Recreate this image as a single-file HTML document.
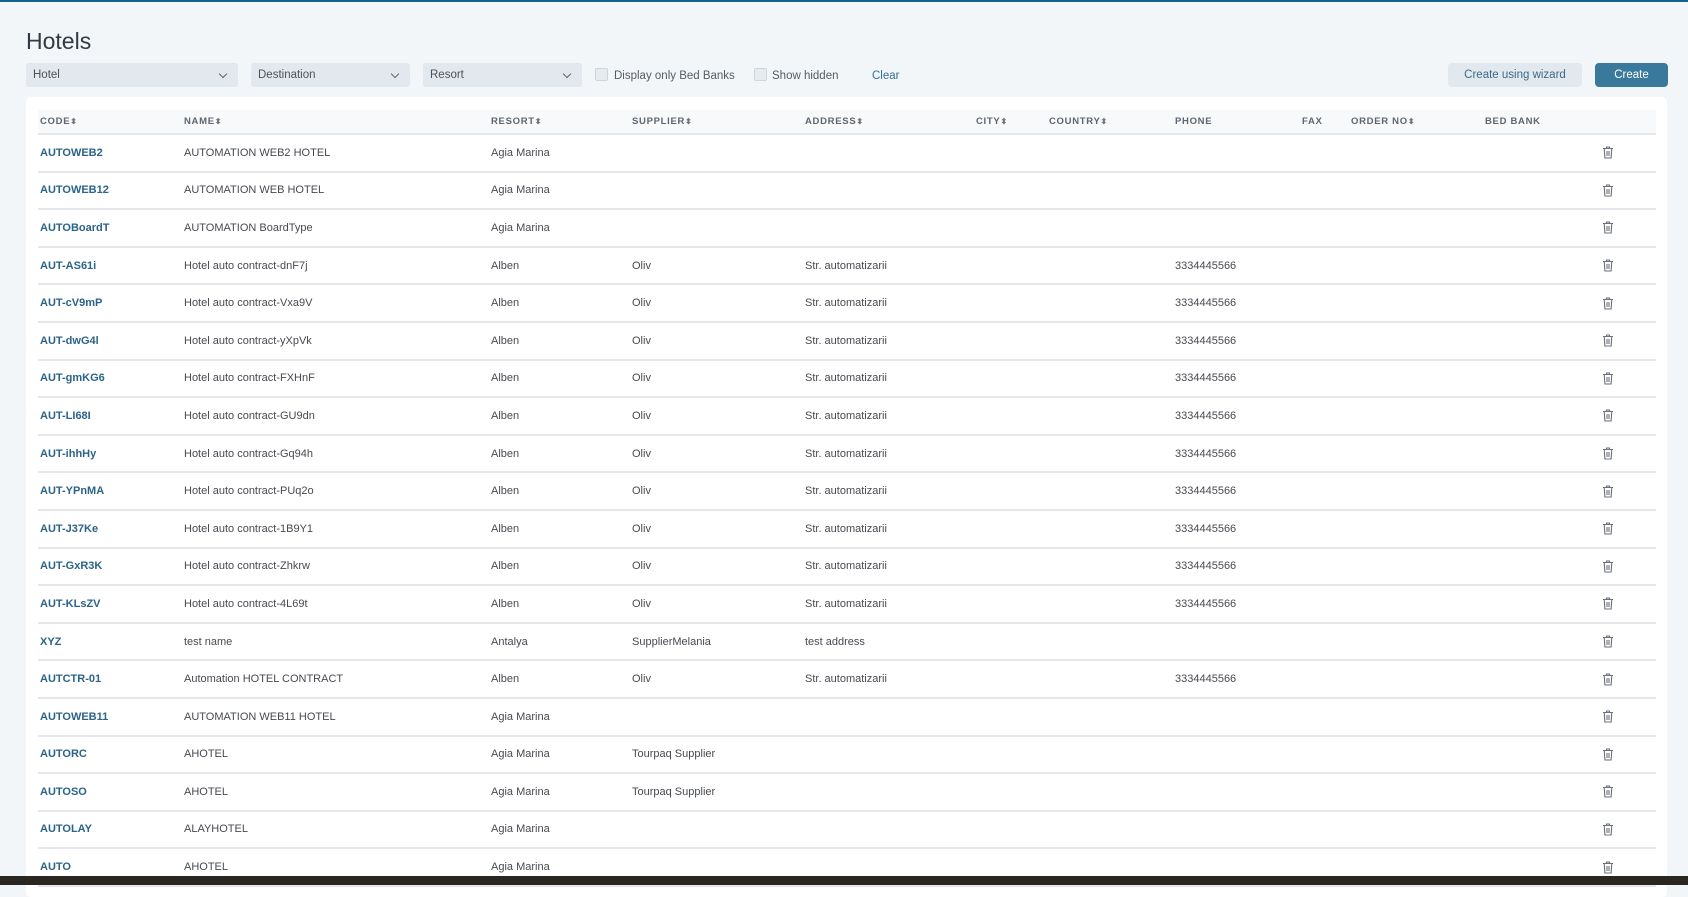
<!DOCTYPE html>
<html><head><meta charset="utf-8"><style>
*{box-sizing:border-box;margin:0;padding:0}
body{width:1688px;height:885px;overflow:hidden;background:#f3f6f9;font-family:"Liberation Sans",sans-serif;color:#3d4046;position:relative}
.top{position:absolute;left:0;top:0;width:1688px;height:2px;background:#11628f}
h1{position:absolute;left:26px;top:28px;font-size:23px;font-weight:400;color:#333a42}
.sel{position:absolute;top:63px;height:24px;background:#e2e8ee;border-radius:3px;font-size:11.5px;line-height:25px;padding-left:7px;color:#4a535c}
.sel:after{content:"";position:absolute;right:12px;top:8px;width:5px;height:5px;border-right:1.3px solid #666;border-bottom:1.3px solid #666;transform:rotate(45deg)}
.cb{position:absolute;top:68px;width:13px;height:13px;border:1px solid #cdd5dd;background:#e6ebf0;border-radius:2px}
.lbl{position:absolute;top:70px;font-size:11.5px;color:#555c63}
.btn{position:absolute;top:63px;height:24px;border-radius:4px;font-size:11.5px;line-height:25px;text-align:center}
.dark{position:absolute;left:0;top:876px;width:1688px;height:9px;background:#2a2622}
.card{position:absolute;left:26px;top:97px;width:1641px;height:800px;background:#fff;border-radius:5px}
table{position:absolute;left:38px;top:110px;width:1618px;border-collapse:collapse;table-layout:fixed;font-size:11px}
th{height:24px;background:#f7f9fb;text-align:left;font-size:9.5px;letter-spacing:.7px;color:#5d6570;font-weight:700;border-bottom:2px solid #e5e7ea;padding-left:2px}
td{height:37.6px;border-bottom:2px solid #e5e7ea;padding-left:2px;white-space:nowrap;color:#464a50}
td.c{color:#2b6488;font-weight:700}
.s{font-size:8px;color:#777}
</style></head><body>
<div class="top"></div>
<h1>Hotels</h1>
<div class="sel" style="left:26px;width:212px">Hotel</div>
<div class="sel" style="left:251px;width:159px">Destination</div>
<div class="sel" style="left:423px;width:159px">Resort</div>
<div class="cb" style="left:595px"></div><div class="lbl" style="left:614px">Display only Bed Banks</div>
<div class="cb" style="left:754px"></div><div class="lbl" style="left:772px">Show hidden</div>
<div class="lbl" style="left:872px;color:#2f6f97">Clear</div>
<div class="btn" style="left:1448px;width:134px;background:#e1e8ee;color:#3d6a88">Create using wizard</div>
<div class="btn" style="left:1595px;width:73px;background:#38799c;color:#fff">Create</div>
<div class="card"></div>
<table>
<colgroup><col style="width:144px"><col style="width:307px"><col style="width:141px"><col style="width:173px"><col style="width:171px"><col style="width:73px"><col style="width:126px"><col style="width:127px"><col style="width:49px"><col style="width:134px"><col style="width:117px"><col style="width:56px"></colgroup>
<tr><th>CODE<span class="s">⬍</span></th><th>NAME<span class="s">⬍</span></th><th>RESORT<span class="s">⬍</span></th><th>SUPPLIER<span class="s">⬍</span></th><th>ADDRESS<span class="s">⬍</span></th><th>CITY<span class="s">⬍</span></th><th>COUNTRY<span class="s">⬍</span></th><th>PHONE</th><th>FAX</th><th>ORDER NO<span class="s">⬍</span></th><th>BED BANK</th><th></th></tr>
<tr><td class="c">AUTOWEB2</td><td>AUTOMATION WEB2 HOTEL</td><td>Agia Marina</td><td></td><td></td><td></td><td></td><td></td><td></td><td></td><td></td><td>T</td></tr>
<tr><td class="c">AUTOWEB12</td><td>AUTOMATION WEB HOTEL</td><td>Agia Marina</td><td></td><td></td><td></td><td></td><td></td><td></td><td></td><td></td><td>T</td></tr>
<tr><td class="c">AUTOBoardT</td><td>AUTOMATION BoardType</td><td>Agia Marina</td><td></td><td></td><td></td><td></td><td></td><td></td><td></td><td></td><td>T</td></tr>
<tr><td class="c">AUT-AS61i</td><td>Hotel auto contract-dnF7j</td><td>Alben</td><td>Oliv</td><td>Str. automatizarii</td><td></td><td></td><td>3334445566</td><td></td><td></td><td></td><td>T</td></tr>
<tr><td class="c">AUT-cV9mP</td><td>Hotel auto contract-Vxa9V</td><td>Alben</td><td>Oliv</td><td>Str. automatizarii</td><td></td><td></td><td>3334445566</td><td></td><td></td><td></td><td>T</td></tr>
<tr><td class="c">AUT-dwG4l</td><td>Hotel auto contract-yXpVk</td><td>Alben</td><td>Oliv</td><td>Str. automatizarii</td><td></td><td></td><td>3334445566</td><td></td><td></td><td></td><td>T</td></tr>
<tr><td class="c">AUT-gmKG6</td><td>Hotel auto contract-FXHnF</td><td>Alben</td><td>Oliv</td><td>Str. automatizarii</td><td></td><td></td><td>3334445566</td><td></td><td></td><td></td><td>T</td></tr>
<tr><td class="c">AUT-LI68I</td><td>Hotel auto contract-GU9dn</td><td>Alben</td><td>Oliv</td><td>Str. automatizarii</td><td></td><td></td><td>3334445566</td><td></td><td></td><td></td><td>T</td></tr>
<tr><td class="c">AUT-ihhHy</td><td>Hotel auto contract-Gq94h</td><td>Alben</td><td>Oliv</td><td>Str. automatizarii</td><td></td><td></td><td>3334445566</td><td></td><td></td><td></td><td>T</td></tr>
<tr><td class="c">AUT-YPnMA</td><td>Hotel auto contract-PUq2o</td><td>Alben</td><td>Oliv</td><td>Str. automatizarii</td><td></td><td></td><td>3334445566</td><td></td><td></td><td></td><td>T</td></tr>
<tr><td class="c">AUT-J37Ke</td><td>Hotel auto contract-1B9Y1</td><td>Alben</td><td>Oliv</td><td>Str. automatizarii</td><td></td><td></td><td>3334445566</td><td></td><td></td><td></td><td>T</td></tr>
<tr><td class="c">AUT-GxR3K</td><td>Hotel auto contract-Zhkrw</td><td>Alben</td><td>Oliv</td><td>Str. automatizarii</td><td></td><td></td><td>3334445566</td><td></td><td></td><td></td><td>T</td></tr>
<tr><td class="c">AUT-KLsZV</td><td>Hotel auto contract-4L69t</td><td>Alben</td><td>Oliv</td><td>Str. automatizarii</td><td></td><td></td><td>3334445566</td><td></td><td></td><td></td><td>T</td></tr>
<tr><td class="c">XYZ</td><td>test name</td><td>Antalya</td><td>SupplierMelania</td><td>test address</td><td></td><td></td><td></td><td></td><td></td><td></td><td>T</td></tr>
<tr><td class="c">AUTCTR-01</td><td>Automation HOTEL CONTRACT</td><td>Alben</td><td>Oliv</td><td>Str. automatizarii</td><td></td><td></td><td>3334445566</td><td></td><td></td><td></td><td>T</td></tr>
<tr><td class="c">AUTOWEB11</td><td>AUTOMATION WEB11 HOTEL</td><td>Agia Marina</td><td></td><td></td><td></td><td></td><td></td><td></td><td></td><td></td><td>T</td></tr>
<tr><td class="c">AUTORC</td><td>AHOTEL</td><td>Agia Marina</td><td>Tourpaq Supplier</td><td></td><td></td><td></td><td></td><td></td><td></td><td></td><td>T</td></tr>
<tr><td class="c">AUTOSO</td><td>AHOTEL</td><td>Agia Marina</td><td>Tourpaq Supplier</td><td></td><td></td><td></td><td></td><td></td><td></td><td></td><td>T</td></tr>
<tr><td class="c">AUTOLAY</td><td>ALAYHOTEL</td><td>Agia Marina</td><td></td><td></td><td></td><td></td><td></td><td></td><td></td><td></td><td>T</td></tr>
<tr><td class="c">AUTO</td><td>AHOTEL</td><td>Agia Marina</td><td></td><td></td><td></td><td></td><td></td><td></td><td></td><td></td><td>T</td></tr>
</table>
<div class="dark"></div>
<script>
document.querySelectorAll('td:last-child').forEach(function(td){
td.innerHTML='<svg width="12" height="13" viewBox="0 0 12 13" style="display:block"><path d="M1 2.5h10M4.5 2.5V1h3v1.5M2.2 2.5l.7 9.5h6.2l.7-9.5M5 5v5M7 5v5" fill="none" stroke="#6b7078" stroke-width="1.1"/></svg>';
});
</script>
</body></html>
